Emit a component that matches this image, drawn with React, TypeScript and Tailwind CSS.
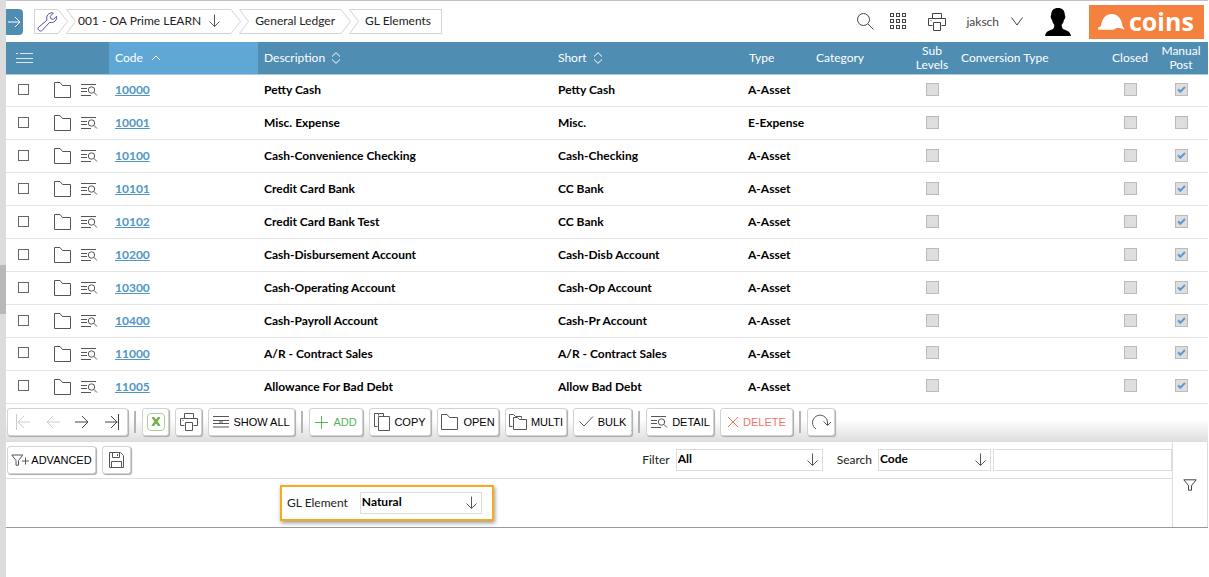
import React from "react";

type IconProps = { className?: string };
const stroke = { fill: "none", stroke: "currentColor", strokeWidth: 1 } as const;

function Folder({ className = "" }: IconProps) {
  return (
    <svg className={className} width="18" height="16" viewBox="0 0 18 16" {...stroke}>
      <path d="M.5 15.500V.5h5.500l2.500 3h8v12z" />
    </svg>
  );
}

function DetailIcon({ className = "" }: IconProps) {
  return (
    <svg className={className} width="18" height="14" viewBox="0 0 18 14" {...stroke}>
      <path d="M1 1.500h15M1 5.500h6M1 8.500h6M1 12.500h10" />
      <circle cx="11.500" cy="7" r="3.200" />
      <path d="M14 9.500l3 3" />
    </svg>
  );
}

function DownArrow({ className = "" }: IconProps) {
  return (
    <svg className={className} width="12" height="14" viewBox="0 0 12 14" {...stroke}>
      <path d="M5.500 .5v12M.5 7.500l5 5 5-5" />
    </svg>
  );
}

function Printer({ className = "" }: IconProps) {
  return (
    <svg className={className} width="18" height="18" viewBox="0 0 18 18" {...stroke}>
      <path d="M4.500 5.500v-5h9v5M4.500 12.500H.5v-7h17v7h-4M5.500 9.500h7v8h-7zM2.500 7.500h1" />
    </svg>
  );
}

function Funnel({ className = "" }: IconProps) {
  return (
    <svg className={className} width="14" height="12" viewBox="0 0 14 12" {...stroke}>
      <path d="M.8.8h12.400L8.500 6.500v4.700h-3V6.500z" />
    </svg>
  );
}

function Sort({ className = "" }: IconProps) {
  return (
    <svg className={className} width="10" height="12" viewBox="0 0 10 12" {...stroke}>
      <path d="M1 4.500L5 .7l4 3.800M1 7.500l4 3.800 4-3.800" />
    </svg>
  );
}

type CrumbProps = { children: React.ReactNode; first?: boolean; last?: boolean; pad: string };

function Crumb({ children, first, last, pad }: CrumbProps) {
  return (
    <li className={first ? "flex h-[25px]" : "-ml-0.5 flex h-[25px]"}>
      {!first && (
        <svg className="shrink-0 text-[#d4d4d4]" width="10" height="25" viewBox="0 0 10 25" {...stroke}>
          <path d="M10 .5H.5l9 12-9 12H10" />
        </svg>
      )}
      <div
        className={`flex items-center gap-2 border-y border-[#d4d4d4] ${pad} ${first ? "border-l" : "pb-0.5"} ${last ? "border-r" : ""}`}
      >
        {children}
      </div>
      {!last && (
        <svg className="shrink-0 text-[#d4d4d4]" width="10" height="25" viewBox="0 0 10 25" {...stroke}>
          <path d="M0 .5l9.500 12-9.500 12" />
        </svg>
      )}
    </li>
  );
}

function Flag({ on, label }: { on?: boolean; label: string }) {
  return (
    <span className="mx-auto grid size-[13px] -translate-y-px">
      <input
        type="checkbox"
        disabled
        defaultChecked={on}
        aria-label={label}
        className="col-start-1 row-start-1 size-[13px] appearance-none border border-[#bbb] bg-[#dedede]"
      />
      {on && (
        <svg className="col-start-1 row-start-1 text-[#5b9bd5]" width="13" height="13" viewBox="0 0 13 13" fill="none" stroke="currentColor" strokeWidth="2">
          <path d="M3 6.300l2.300 2.400L10 4" />
        </svg>
      )}
    </span>
  );
}

type ToolProps = { label?: string; name?: string; width: string; tone?: string; children: React.ReactNode };

function Tool({ label, name, width, tone = "text-[#555]", children }: ToolProps) {
  return (
    <button
      type="button"
      aria-label={name}
      className={`flex h-7 shrink-0 items-center justify-center gap-1 rounded-[3px] border border-[#d2d2d2] bg-white shadow-[1px_1px_1px_#aaa] ${width} ${tone}`}
    >
      {children}
      {label && <span className={tone === "text-[#555]" ? "text-black" : ""}>{label}</span>}
    </button>
  );
}

function Divider() {
  return <span className="h-[22px] w-0.5 shrink-0 bg-[#b4b4b4]" />;
}

function Pick({ id, label, value, width, gap }: { id: string; label: string; value: string; width: string; gap: string }) {
  return (
    <div className={`flex items-center ${gap}`}>
      <label htmlFor={id}>{label}</label>
      <div className={`relative ${width}`}>
        <select
          id={id}
          className="block h-[22px] w-full appearance-none border border-[#dcdcdc] bg-white px-px pb-0.5 font-bold text-black"
        >
          <option>{value}</option>
        </select>
        <DownArrow className="pointer-events-none absolute top-1 right-1 text-[#555]" />
      </div>
    </div>
  );
}

const rows = [
  { code: "10000", description: "Petty Cash", short: "Petty Cash", type: "A-Asset", post: true },
  { code: "10001", description: "Misc. Expense", short: "Misc.", type: "E-Expense", post: false },
  { code: "10100", description: "Cash-Convenience Checking", short: "Cash-Checking", type: "A-Asset", post: true },
  { code: "10101", description: "Credit Card Bank", short: "CC Bank", type: "A-Asset", post: true },
  { code: "10102", description: "Credit Card Bank Test", short: "CC Bank", type: "A-Asset", post: true },
  { code: "10200", description: "Cash-Disbursement Account", short: "Cash-Disb Account", type: "A-Asset", post: true },
  { code: "10300", description: "Cash-Operating Account", short: "Cash-Op Account", type: "A-Asset", post: true },
  { code: "10400", description: "Cash-Payroll Account", short: "Cash-Pr Account", type: "A-Asset", post: true },
  { code: "11000", description: "A/R - Contract Sales", short: "A/R - Contract Sales", type: "A-Asset", post: true },
  { code: "11005", description: "Allowance For Bad Debt", short: "Allow Bad Debt", type: "A-Asset", post: true },
];

function TopBar() {
  return (
    <header className="flex h-[42px] items-center border-t border-[#c4c4c4]">
      <button type="button" aria-label="Expand menu" className="flex h-[26px] w-[17px] items-center justify-center rounded-r-sm bg-[#4f8db3] text-white">
        <svg width="13" height="12" viewBox="0 0 13 12" {...stroke}>
          <path d="M0 6h12M7 1l5 5-5 5" />
        </svg>
      </button>
      <nav aria-label="Breadcrumb" className="ml-[11px]">
        <ol className="flex">
          <Crumb first pad="pl-0.5">
            <svg className="text-[#5b4aa0]" width="21" height="20" viewBox="0 0 21 20" {...stroke}>
              <path d="M1.800 18.200c-1.200-1.200-.9-2.300.1-3.200l8-6.800c-.6-3 .1-5.200 2.100-6.500 1.300-.8 2.700-1.100 4.300-.7l-3 3.300.7 2.500 2.500.6 3-3.100c.3 2-.2 3.500-1.300 4.700-1.500 1.500-3.300 1.800-5.600 1.400l-7.300 7.900c-1.100 1-2.400 1-3.500-.1z" />
            </svg>
          </Crumb>
          <Crumb pad="pl-0.5 pr-2.5">
            <a href="#company">001 - OA Prime LEARN</a>
            <DownArrow className="text-[#555]" />
          </Crumb>
          <Crumb pad="px-1.5">
            <a href="#ledger">General Ledger</a>
          </Crumb>
          <Crumb last pad="pl-1.5 pr-2.5">
            <a href="#elements">GL Elements</a>
          </Crumb>
        </ol>
      </nav>
      <div className="ml-auto flex items-center pr-1 text-[#444]">
        <button type="button" aria-label="Search">
          <svg width="17" height="17" viewBox="0 0 17 17" {...stroke}>
            <circle cx="6.500" cy="6.500" r="6" />
            <path d="M11 11l5.500 5.500" />
          </svg>
        </button>
        <button type="button" aria-label="Applications" className="ml-4">
          <svg width="17" height="17" viewBox="0 0 17 17" {...stroke}>
            {[0.5, 6.5, 12.5].map((y) =>
              [0.5, 6.5, 12.5].map((x) => <rect key={`${x}-${y}`} x={x} y={y} width="3" height="3" />)
            )}
          </svg>
        </button>
        <button type="button" aria-label="Print" className="ml-[21px]">
          <Printer />
        </button>
        <button type="button" className="ml-5 flex items-center gap-3">
          jaksch
          <svg width="12" height="9" viewBox="0 0 12 9" {...stroke}>
            <path d="M.5.5L6 8 11.500.5" />
          </svg>
        </button>
        <svg className="ml-[22px] text-black" width="26" height="28" viewBox="0 0 26 28" fill="currentColor">
          <path d="M13 0c4.500 0 7 2.800 6.800 7.200.7.400.7 1.600.2 3-.2.700-.5 1.300-1 1.500-.3 2.300-1.200 3.800-2.300 5 0 2.300.3 3.800 1.800 4.600 3.300 1.300 6.500 1.800 7.500 6.700-8 .8-18 .8-26 0 1-4.900 4.200-5.400 7.500-6.700 1.500-.8 1.800-2.300 1.800-4.600-1.100-1.200-2-2.700-2.300-5-.5-.2-.8-.8-1-1.500-.5-1.400-.5-2.600.2-3C6 2.800 8.500 0 13 0z" />
        </svg>
        <div className="ml-[18px] flex h-[34px] w-[115px] items-center gap-1 bg-[#f5813f] pl-[9px] text-white">
          <svg width="27" height="16" viewBox="0 0 27 16" fill="currentColor">
            <path d="M.3 15.800c-.8-1.800.4-3 2.700-3.500C3.500 5.500 7.500 0 13.500 0c6 0 10 4.500 10.800 11.200l2.400 4.600c-3-1.500-5.700-2-8.700-1.600-1 .8-2 1.500-3.500 1.600z" />
          </svg>
          <span className="pb-0.5 font-['Open_Sans',sans-serif] text-[25px] leading-8 font-bold">coins</span>
        </div>
      </div>
    </header>
  );
}

function ElementsTable() {
  return (
    <table className="h-[362px] w-full table-fixed border-collapse text-left">
      <colgroup>
        <col className="w-[34px]" />
        <col className="w-[69px]" />
        <col className="w-[149px]" />
        <col />
        <col className="w-[190px]" />
        <col className="w-[68px]" />
        <col className="w-[97px]" />
        <col className="w-[50px]" />
        <col className="w-[149px]" />
        <col className="w-12" />
        <col className="w-[54px]" />
      </colgroup>
      <thead>
        <tr className="h-8 border-b border-[#a9cbe0] bg-[#4f8db3] leading-[14px] text-white [&>th]:p-0 [&>th]:font-normal">
          <th colSpan={2}>
            <svg className="ml-2.5 opacity-80" width="17" height="12" viewBox="0 0 17 12" {...stroke}>
              <path d="M0 1.500h2M4 1.500h13M0 6.500h17M0 10.500h17" />
            </svg>
          </th>
          <th className="bg-[#5fa8d6]">
            <span className="flex items-center gap-2 pl-1.5">
              Code
              <svg width="10" height="6" viewBox="0 0 10 6" {...stroke}>
                <path d="M1 5l4-4 4 4" />
              </svg>
            </span>
          </th>
          <th>
            <span className="flex items-center gap-1.5 pl-1.5">
              Description <Sort />
            </span>
          </th>
          <th>
            <span className="flex items-center gap-1.5 pl-1.5">
              Short <Sort />
            </span>
          </th>
          <th>
            <span className="pl-[7px]">Type</span>
          </th>
          <th>
            <span className="pl-1.5">Category</span>
          </th>
          <th className="text-center">
            Sub
            <br />
            Levels
          </th>
          <th>
            <span className="pl-1">Conversion Type</span>
          </th>
          <th className="text-center">Closed</th>
          <th className="text-center">
            Manual
            <br />
            Post
          </th>
        </tr>
      </thead>
      <tbody className="font-bold text-black">
        {rows.map((row) => (
          <tr key={row.code} className="border-b border-[#e4e4e4] [&>td]:p-0">
            <td>
              <input
                type="checkbox"
                aria-label={`Select ${row.code}`}
                className="mx-auto block size-[11px] -translate-y-px appearance-none border border-[#666] bg-white"
              />
            </td>
            <td>
              <span className="flex items-center gap-2 pl-3.5 text-[#555]">
                <button type="button" aria-label={`Open ${row.code}`}>
                  <Folder />
                </button>
                <button type="button" aria-label={`Detail ${row.code}`}>
                  <DetailIcon />
                </button>
              </span>
            </td>
            <td>
              <a href={`#${row.code}`} className="ml-1.5 text-[#5096c4] underline">
                {row.code}
              </a>
            </td>
            <td>
              <span className="pl-1.5">{row.description}</span>
            </td>
            <td>
              <span className="pl-1.5">{row.short}</span>
            </td>
            <td>
              <span className="pl-1.5 whitespace-nowrap">{row.type}</span>
            </td>
            <td />
            <td>
              <Flag label="Sub levels" />
            </td>
            <td />
            <td>
              <Flag label="Closed" />
            </td>
            <td>
              <Flag label="Manual post" on={row.post} />
            </td>
          </tr>
        ))}
      </tbody>
    </table>
  );
}

function Toolbar() {
  return (
    <div className="flex h-[38px] items-center gap-1.5 border-b border-[#ddd] bg-linear-to-b from-white from-40% to-[#dfdfdf] pb-0.5 pl-px font-['Liberation_Sans',sans-serif] text-[11px]">
      <div className="flex h-7 w-[121px] shrink-0 items-center justify-around rounded-[3px] border border-[#d2d2d2] bg-white text-[#444] shadow-[1px_1px_1px_#aaa]">
        <button type="button" aria-label="First page" disabled className="text-[#ccc]">
          <svg width="14" height="16" viewBox="0 0 14 16" {...stroke}>
            <path d="M.5 0v16M14 8H2M8 2L2 8l6 6" />
          </svg>
        </button>
        <button type="button" aria-label="Previous page" disabled className="text-[#ccc]">
          <svg width="14" height="14" viewBox="0 0 14 14" {...stroke}>
            <path d="M14 7H1M7 1L1 7l6 6" />
          </svg>
        </button>
        <button type="button" aria-label="Next page">
          <svg width="14" height="14" viewBox="0 0 14 14" {...stroke}>
            <path d="M0 7h13M7 1l6 6-6 6" />
          </svg>
        </button>
        <button type="button" aria-label="Last page">
          <svg width="14" height="16" viewBox="0 0 14 16" {...stroke}>
            <path d="M13.500 0v16M0 8h12.500M6 2l6 6-6 6" />
          </svg>
        </button>
      </div>
      <Divider />
      <Tool name="Export to Excel" width="w-[27px]" tone="text-[#6fb14b]">
        <span className="flex size-[18px] items-center justify-center rounded-sm border border-[#a5d18e]">
          <svg width="10" height="9" viewBox="0 0 10 9" fill="none" stroke="currentColor" strokeWidth="2.400">
            <path d="M1.500 0l7 9M8.500 0l-7 9" />
          </svg>
        </span>
      </Tool>
      <Tool name="Print list" width="w-[27px]">
        <Printer />
      </Tool>
      <Tool label="SHOW ALL" width="w-[87px]">
        <svg width="16" height="13" viewBox="0 0 16 13" {...stroke}>
          <path d="M0 1.500h16M0 5.500h16M0 8.500h16M0 12h16M6 7h4" />
        </svg>
      </Tool>
      <Divider />
      <Tool label="ADD" width="w-[54px]" tone="text-[#55b455]">
        <svg width="14" height="14" viewBox="0 0 14 14" {...stroke}>
          <path d="M6.500 1v13M0 7.500h13" />
        </svg>
      </Tool>
      <Tool label="COPY" width="w-[62px]">
        <svg width="16" height="18" viewBox="0 0 16 18" {...stroke}>
          <path d="M4.500 2.500V.5h-4v13h3M9.500 3V.5h-5M4.500 3.500h11v14h-11z" />
        </svg>
      </Tool>
      <Tool label="OPEN" width="w-[62px]">
        <Folder />
      </Tool>
      <Tool label="MULTI" width="w-[62px]">
        <svg width="18" height="16" viewBox="0 0 18 16" {...stroke}>
          <path d="M3.500 12.500h-3V.5h4l2 2h6v2M4.500 15.500v-12h4l2 2h7v10z" />
        </svg>
      </Tool>
      <Tool label="BULK" width="w-[59px]">
        <svg width="15" height="11" viewBox="0 0 15 11" {...stroke}>
          <path d="M.5 5.500L5 10 14 .5" />
        </svg>
      </Tool>
      <Divider />
      <Tool label="DETAIL" width="w-[68px]">
        <DetailIcon />
      </Tool>
      <Tool label="DELETE" width="w-[73px]" tone="text-[#ee7468]">
        <svg width="12" height="12" viewBox="0 0 12 12" {...stroke}>
          <path d="M1 1l10 10M11 1L1 11" />
        </svg>
      </Tool>
      <Divider />
      <Tool name="Refresh" width="w-7">
        <svg width="20" height="16" viewBox="0 0 20 16" {...stroke}>
          <path d="M5 15A7.500 7.500 0 1 1 16.500 8v3M12.500 7.500l4 4L20 8" />
        </svg>
      </Tool>
    </div>
  );
}

function FilterPanel() {
  return (
    <section className="flex border-b border-[#999]">
      <div className="flex-1">
        <div className="flex h-[37px] items-center border-b border-[#dedede]">
          <div className="flex gap-1.5 pl-px font-['Liberation_Sans',sans-serif] text-[11px]">
            <Tool label="ADVANCED" width="w-[89px]">
              <svg className="-mr-0.5" width="18" height="12" viewBox="0 0 18 12" {...stroke}>
                <path d="M.8 1h11L7.500 6.500v4.700h-2.500V6.500zM11 7h7M14.500 3.500v7" />
              </svg>
            </Tool>
            <Tool name="Save filter" width="w-[29px]">
              <svg width="15" height="16" viewBox="0 0 15 16" {...stroke}>
                <path d="M.5.5h11l3 3v12H.5zM3.500.5v5h7v-5M8.500 2v2M2.500 15.500v-6h10v6" />
              </svg>
            </Tool>
          </div>
          <div className="ml-auto flex items-center">
            <Pick id="filter" label="Filter" value="All" width="w-[147px]" gap="gap-1.5" />
            <span className="w-3.5" />
            <Pick id="search" label="Search" value="Code" width="w-[113px]" gap="gap-1.5" />
            <input aria-label="Search text" className="ml-0.5 h-[22px] w-[179px] border border-[#dcdcdc] px-1" />
          </div>
        </div>
        <div className="flex h-12 items-center pl-[274px]">
          <div className="flex h-9 w-[214px] items-center border-2 border-[#f5ab1c] pl-[5px] shadow-[1px_2px_4px_#999]">
            <Pick id="element" label="GL Element" value="Natural" width="w-[122px]" gap="gap-3" />
          </div>
        </div>
      </div>
      <button type="button" aria-label="Toggle filters" className="flex w-9 items-center justify-center border-x border-[#dcdcdc] text-[#444]">
        <Funnel />
      </button>
    </section>
  );
}

export default function App() {
  return (
    <div className="flex min-h-screen bg-white font-['Lato',sans-serif] text-[12px] leading-4 text-[#222]">
      <div className="flex w-1.5 shrink-0 flex-col bg-[#dcdcdc] pt-[265px]">
        <div className="h-[49px] bg-[#b8b8b8]" />
      </div>
      <main className="min-w-0 flex-1 pr-px">
        <TopBar />
        <ElementsTable />
        <Toolbar />
        <FilterPanel />
      </main>
    </div>
  );
}
